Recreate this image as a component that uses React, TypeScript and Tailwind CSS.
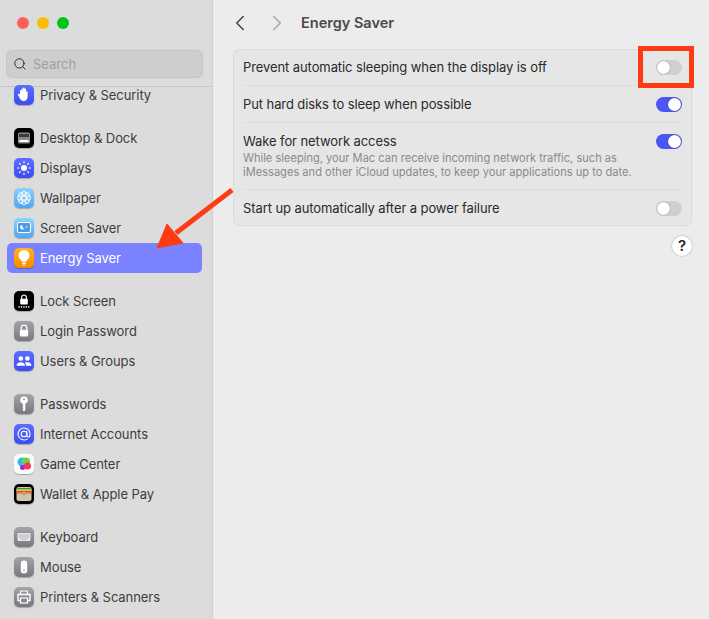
import { ChevronLeft, ChevronRight, Search } from "lucide-react";
import type { ReactNode } from "react";

const FONT = "font-['Inter','Liberation_Sans',sans-serif]";

function Tile({ className, children }: { className: string; children: ReactNode }) {
  return (
    <div className={`w-5 h-5 rounded-[5px] shrink-0 flex items-center justify-center overflow-hidden shadow-[0_1px_1px_rgba(0,0,0,0.25)] ${className}`}>
      {children}
    </div>
  );
}

const BLUE = "bg-gradient-to-b from-[#5c6dff] to-[#3d4cf0]";
const SKY = "bg-gradient-to-b from-[#8ed3fb] to-[#4fa6ee]";
const GRAY = "bg-gradient-to-b from-[#a3a3a8] to-[#78787d]";

const icons: Record<string, ReactNode> = {
  privacy: (
    <Tile className={BLUE}>
      <svg viewBox="0 0 20 20" className="w-5 h-5" fill="white">
        <path d="M6 9.5V5.5a.8.8 0 0 1 1.5 0V4a.8.8 0 0 1 1.5 0v-.6a.8.8 0 0 1 1.6 0V4a.8.8 0 0 1 1.5.2v2.5a.8.8 0 0 1 1.5.2v4.8c0 2.6-1.6 4.3-4 4.3-2 0-2.9-1-3.7-2.5L4 9.9c-.5-1 .8-1.7 1.4-.9z" />
      </svg>
    </Tile>
  ),
  desktop: (
    <Tile className="bg-black">
      <svg viewBox="0 0 20 20" className="w-5 h-5">
        <rect x="4" y="4.5" width="12" height="11" rx="1.5" fill="#8a8a8a" />
        <rect x="5" y="6" width="10" height="3" fill="#3a3a3a" />
        <rect x="5.5" y="12" width="9" height="2" rx="0.5" fill="white" />
      </svg>
    </Tile>
  ),
  displays: (
    <Tile className={BLUE}>
      <svg viewBox="0 0 20 20" className="w-5 h-5" stroke="white" fill="white" strokeWidth="1.2" strokeLinecap="round">
        <circle cx="10" cy="10" r="3" stroke="none" />
        <path d="M10 3.6v1.2M10 15.2v1.2M3.6 10h1.2M15.2 10h1.2M5.5 5.5l.8.8M13.7 13.7l.8.8M5.5 14.5l.8-.8M13.7 6.3l.8-.8" />
      </svg>
    </Tile>
  ),
  wallpaper: (
    <Tile className={SKY}>
      <svg viewBox="0 0 20 20" className="w-5 h-5" fill="none" stroke="white" strokeWidth="1">
        <circle cx="10" cy="5.8" r="2.3" />
        <circle cx="10" cy="14.2" r="2.3" />
        <circle cx="5.8" cy="10" r="2.3" />
        <circle cx="14.2" cy="10" r="2.3" />
        <circle cx="7" cy="7" r="2.3" />
        <circle cx="13" cy="7" r="2.3" />
        <circle cx="7" cy="13" r="2.3" />
        <circle cx="13" cy="13" r="2.3" />
      </svg>
    </Tile>
  ),
  saver: (
    <Tile className={SKY}>
      <svg viewBox="0 0 20 20" className="w-5 h-5">
        <rect x="3.5" y="4.5" width="13" height="10" rx="1.5" fill="#4a9be4" stroke="white" strokeWidth="1" />
        <path d="M8.5 7a2.2 2.2 0 1 0 1.6 3.2A2.4 2.4 0 0 1 8.5 7z" fill="white" />
        <circle cx="12.5" cy="9" r="0.8" fill="white" />
      </svg>
    </Tile>
  ),
  energy: (
    <Tile className="bg-gradient-to-b from-[#ffb21a] to-[#f98a00]">
      <svg viewBox="0 0 20 20" className="w-5 h-5" fill="white">
        <path d="M10 2a5.4 5.4 0 0 0-3.300 9.700c.8.700 1.100 1.300 1.200 2.300h4.200c.1-1 .4-1.600 1.200-2.300A5.400 5.400 0 0 0 10 2z" />
        <rect x="8" y="14.700" width="4" height="1.200" rx="0.600" />
        <rect x="8.600" y="16.400" width="2.800" height="1.100" rx="0.500" />
      </svg>
    </Tile>
  ),
  lock: (
    <Tile className="bg-black">
      <svg viewBox="0 0 20 20" className="w-5 h-5">
        <path d="M7.600 8V6.400a2.400 2.400 0 0 1 4.800 0V8" fill="none" stroke="white" strokeWidth="1.200" />
        <rect x="6.200" y="7.800" width="7.600" height="5.600" rx="1" fill="white" />
        <path d="M4.500 16h11" stroke="white" strokeWidth="1.300" strokeDasharray="1.300 1.100" />
      </svg>
    </Tile>
  ),
  login: (
    <Tile className={GRAY}>
      <svg viewBox="0 0 20 20" className="w-5 h-5">
        <path d="M7.200 9V7a2.800 2.800 0 0 1 5.600 0v2" fill="none" stroke="white" strokeWidth="1.300" />
        <rect x="5.800" y="8.800" width="8.400" height="6.600" rx="1" fill="white" />
      </svg>
    </Tile>
  ),
  users: (
    <Tile className={BLUE}>
      <svg viewBox="0 0 20 20" className="w-5 h-5" fill="white">
        <circle cx="6.800" cy="7.500" r="2.300" />
        <circle cx="13.400" cy="7.500" r="2.300" />
        <path d="M2.500 14.800c0-2.300 1.900-3.600 4.300-3.600s4.200 1.300 4.200 3.600zM12 14.800c0-1.400-.4-2.600-1.200-3.200.7-.3 1.600-.4 2.600-.4 2.400 0 4.100 1.300 4.100 3.600z" />
      </svg>
    </Tile>
  ),
  passwords: (
    <Tile className={GRAY}>
      <svg viewBox="0 0 20 20" className="w-5 h-5" fill="white" fillRule="evenodd">
        <path d="M10 2.600a3.600 3.600 0 0 1 1.300 7V16l-1.300 1.500L8.700 16v-1l.8-.8-.8-.8v-.9l.8-.8-.8-.8V9.600a3.600 3.600 0 0 1 1.300-7zm0 1.600a1 1 0 1 0 0 2 1 1 0 0 0 0-2z" />
      </svg>
    </Tile>
  ),
  internet: (
    <Tile className={BLUE}>
      <svg viewBox="0 0 20 20" className="w-5 h-5" fill="none" stroke="white" strokeWidth="1.100" strokeLinecap="round">
        <circle cx="10" cy="10" r="2.800" />
        <path d="M12.800 7.200v4.100c0 1 .6 1.700 1.500 1.700s1.700-1.100 1.700-3c0-3.400-2.700-6-6-6a6 6 0 1 0 3.200 11.100" />
      </svg>
    </Tile>
  ),
  game: (
    <Tile className="bg-white">
      <svg viewBox="0 0 20 20" className="w-5 h-5">
        <circle cx="8" cy="8" r="4.500" fill="#35b8f2" />
        <circle cx="12" cy="7.500" r="4" fill="#6fd13c" />
        <circle cx="8.500" cy="13.500" r="2.500" fill="#a51fe0" />
        <circle cx="13.500" cy="12" r="3.500" fill="#f9355f" />
      </svg>
    </Tile>
  ),
  wallet: (
    <Tile className="bg-black">
      <svg viewBox="0 0 20 20" className="w-5 h-5">
        <rect x="2.500" y="3" width="15" height="14" rx="2" fill="#cfc6b2" />
        <rect x="2.500" y="4" width="15" height="1.500" fill="#3d9a4a" />
        <rect x="2.500" y="5.500" width="15" height="1.500" fill="#e8c22f" />
        <rect x="2.500" y="7" width="15" height="1.500" fill="#e5552d" />
        <path d="M2.500 9h5l2.500 2 2.500-2h5" fill="none" stroke="#e5552d" strokeWidth="0.800" />
      </svg>
    </Tile>
  ),
  keyboard: (
    <Tile className={GRAY}>
      <svg viewBox="0 0 20 20" className="w-5 h-5">
        <rect x="3.500" y="6" width="13" height="8" rx="1" fill="#e9e9e9" />
        <path d="M5 8h10M5 10h10M6.500 12h7" stroke="#9a9a9a" strokeWidth="1" strokeDasharray="1 0.500" />
      </svg>
    </Tile>
  ),
  mouse: (
    <Tile className={GRAY}>
      <svg viewBox="0 0 20 20" className="w-5 h-5">
        <rect x="6.800" y="3.500" width="6.400" height="13" rx="3.200" fill="white" />
        <circle cx="10" cy="13.500" r="0.700" fill="#777" />
      </svg>
    </Tile>
  ),
  printers: (
    <Tile className={GRAY}>
      <svg viewBox="0 0 20 20" className="w-5 h-5" fill="none" stroke="white">
        <path d="M6.500 7V4h7v3" strokeWidth="1.200" />
        <path d="M6 13.500H4V7.500h12v6h-2" strokeWidth="1.400" />
        <rect x="6.500" y="11" width="7" height="5" strokeWidth="1.200" />
      </svg>
    </Tile>
  ),
};

const groups = [
  [["privacy", "Privacy & Security"]],
  [
    ["desktop", "Desktop & Dock"],
    ["displays", "Displays"],
    ["wallpaper", "Wallpaper"],
    ["saver", "Screen Saver"],
    ["energy", "Energy Saver"],
  ],
  [
    ["lock", "Lock Screen"],
    ["login", "Login Password"],
    ["users", "Users & Groups"],
  ],
  [
    ["passwords", "Passwords"],
    ["internet", "Internet Accounts"],
    ["game", "Game Center"],
    ["wallet", "Wallet & Apple Pay"],
  ],
  [
    ["keyboard", "Keyboard"],
    ["mouse", "Mouse"],
    ["printers", "Printers & Scanners"],
  ],
];

function Toggle({ on, className = "" }: { on?: boolean; className?: string }) {
  return (
    <div className={`w-[26px] h-[15px] rounded-full flex items-center shrink-0 p-px ${on ? "bg-[#4a55f5] justify-end" : "bg-[#cfcfcf] justify-start"} ${className}`}>
      <div className="w-[13px] h-[13px] rounded-full bg-white shadow-[0_0_1px_rgba(0,0,0,0.5)]" />
    </div>
  );
}

function Row({ h, label, on, desc, last }: { h: string; label: string; on?: boolean; desc?: string; last?: boolean }) {
  return (
    <div className={`mx-[9px] flex justify-between ${h} ${desc ? "items-start pt-[9px]" : "items-center"} ${last ? "" : "border-b border-[#dcdcdc]"}`}>
      <div className="min-w-0">
        <div className="text-[13px] leading-[19px] tracking-[-0.09px] text-[#2a2a2a]">{label}</div>
        {desc && <div className="w-[400px] text-[11.1px] leading-[14px] text-[#8a8a8a]">{desc}</div>}
      </div>
      <Toggle on={on} className={desc ? "mt-[2px]" : ""} />
    </div>
  );
}

export default function App() {
  return (
    <div className={`relative flex w-[709px] h-[619px] overflow-hidden bg-[#ececec] ${FONT}`}>
      {/* Sidebar */}
      <aside className="w-[213px] shrink-0 h-full bg-[#dcdcdc] border-r border-[#cfcfcf] flex flex-col">
        <div className="flex gap-2 pt-[17px] pl-[17px]">
          <div className="w-3 h-3 rounded-full bg-[#ff5f57]" />
          <div className="w-3 h-3 rounded-full bg-[#febc00]" />
          <div className="w-3 h-3 rounded-full bg-[#00c417]" />
        </div>
        <div className="mx-1.5 w-[197px] mt-[21px] h-[28px] rounded-md bg-[#cecece] border border-[#c4c4c4] flex items-center pl-[6px] gap-[6px]">
          <Search size={14} strokeWidth={1.6} className="text-[#222]" />
          <span className="mt-[2px] text-[13px] text-[#a0a0a0]">Search</span>
        </div>
        <div className="mt-2 h-px bg-[#c6c6c6]" />
        <nav className="flex-1 min-h-0 overflow-hidden flex flex-col gap-[13px] -mt-[7px]">
          {groups.map((group) => (
            <div key={group[0][0]} className="flex flex-col">
              {group.map(([key, label]) => {
                const active = key === "energy";
                return (
                  <div
                    key={key}
                    className={`mx-[7px] w-[195px] h-[30px] shrink-0 rounded-[5px] flex items-center gap-[6px] pl-[7px] text-[13px] tracking-[-0.07px] ${active ? "bg-[#7a82ff] text-white" : "text-[#3c3c3c]"}`}
                  >
                    {icons[key]}
                    <span className="mt-[2px]">{label}</span>
                  </div>
                );
              })}
            </div>
          ))}
        </nav>
      </aside>

      {/* Main pane */}
      <main className="flex-1 min-w-0 pl-5 pr-[17px] flex flex-col">
        <header className="h-[49px] shrink-0 flex items-center pb-[4px]">
          <ChevronLeft size={26} strokeWidth={1.5} className="text-[#4a4a4a] -ml-[6px]" />
          <ChevronRight size={26} strokeWidth={1.5} className="text-[#a8a8a8] ml-[11px]" />
          <h1 className="ml-[11px] text-[14.5px] font-semibold text-[#4a4a4a]">Energy Saver</h1>
        </header>
        <section className="h-[177px] shrink-0 rounded-md bg-[#e6e6e6] border border-[#dadada]">
          <Row h="h-[36px] pb-px" label="Prevent automatic sleeping when the display is off" />
          <Row h="h-[37px]" label="Put hard disks to sleep when possible" on />
          <Row
            h="h-[67px]"
            label="Wake for network access"
            on
            desc="While sleeping, your Mac can receive incoming network traffic, such as iMessages and other iCloud updates, to keep your applications up to date."
          />
          <Row h="h-[35px] pt-[2px]" label="Start up automatically after a power failure" last />
        </section>
        <div className="mt-[10px] flex justify-end">
          <div className="w-5 h-5 rounded-full bg-white shadow-[0_0_2px_rgba(0,0,0,0.35)] flex items-center justify-center text-[15px] font-semibold text-[#222]">
            ?
          </div>
        </div>
      </main>

      {/* Annotations drawn over the screenshot */}
      <div className="absolute left-[638px] top-[46px] w-[56px] h-[42px] border-[5px] border-[#ff3b14]" />
      <svg className="absolute left-0 top-0 pointer-events-none" width="709" height="619" viewBox="0 0 709 619">
        <path d="M232 190 L176 233" stroke="#ff3b14" strokeWidth="5" fill="none" />
        <path d="M157 248 L167 224 L183 243 Z" fill="#ff3b14" stroke="#ff3b14" strokeWidth="1" strokeLinejoin="round" />
      </svg>
    </div>
  );
}
